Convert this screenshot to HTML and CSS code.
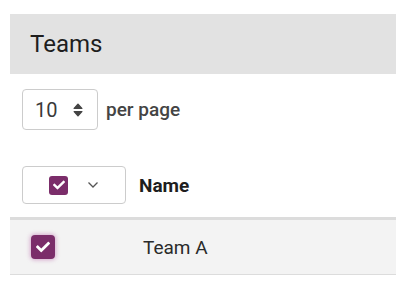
FILE: index.html
```html
<!doctype html>
<html lang="en">
<head>
    <meta charset="UTF-8">
    <title>Teams</title>
    <link rel="stylesheet" href="styles.css">
</head>
<body>
    <div class="page">
        <div class="page-header">Teams</div>

        <div class="per-page">
            <div class="per-page-select">
                <span>10</span>
                <svg class="sort-icon" width="10" height="14" viewBox="0 0 10 14">
                    <path d="M1.2 5.4 L5 1.2 L8.8 5.4 Z" fill="#444" stroke="#444" stroke-width="1.4" stroke-linejoin="round"/>
                    <path d="M1.2 8.6 L5 12.8 L8.8 8.6 Z" fill="#444" stroke="#444" stroke-width="1.4" stroke-linejoin="round"/>
                </svg>
            </div>
            <span class="per-page-label">per page</span>
        </div>

        <div class="team-table">
            <div class="team-head">
                <div class="col-select">
                    <div class="bulk-select">
                        <span class="check-box">
                            <svg width="12" height="12" viewBox="0 0 512 512"><path fill="#fff" d="M173.9 439.4l-166.4-166.4c-10-10-10-26.2 0-36.2l36.2-36.2c10-10 26.2-10 36.2 0L192 312.7 432.1 72.6c10-10 26.2-10 36.2 0l36.2 36.2c10 10 10 26.2 0 36.2l-294.4 294.4c-10 10-26.2 10-36.2 0z"/></svg>
                        </span>
                        <svg class="chevron" width="12" height="8" viewBox="0 0 12 8"><path d="M1.5 1.5 L6 6 L10.5 1.5" fill="none" stroke="#555" stroke-width="1.3"/></svg>
                    </div>
                </div>
                <div class="col-name">Name</div>
            </div>
            <div class="team-row">
                <div class="col-select">
                    <span class="check-box check-box-row">
                        <svg width="14" height="14" viewBox="0 0 512 512"><path fill="#fff" d="M173.9 439.4l-166.4-166.4c-10-10-10-26.2 0-36.2l36.2-36.2c10-10 26.2-10 36.2 0L192 312.7 432.1 72.6c10-10 26.2-10 36.2 0l36.2 36.2c10 10 10 26.2 0 36.2l-294.4 294.4c-10 10-26.2 10-36.2 0z"/></svg>
                    </span>
                </div>
                <div class="col-name">Team A</div>
            </div>
        </div>
    </div>
</body>
</html>
```

FILE: styles.css
```css
body {
    margin: 0;
    font-family: Roboto, "Liberation Sans", sans-serif;
    color: #222;
    background: #fff;
}
.page {
    padding: 14px 0 0 10px;
}
.page-header {
    height: 60px;
    line-height: 61px;
    padding-left: 20px;
    background: #e2e2e2;
    font-size: 24px;
    color: #1e1e1e;
}
.per-page {
    display: flex;
    align-items: center;
    gap: 8px;
    margin-top: 15px;
    padding-left: 12px;
}
.per-page-select {
    width: 76px;
    height: 41px;
    box-sizing: border-box;
    border: 1px solid #ccc;
    border-radius: 4px;
    display: flex;
    align-items: center;
    justify-content: space-between;
    padding: 0 14px 0 12px;
    font-size: 20px;
    color: #3a3a3a;
}
.per-page-label {
    font-size: 19px;
    font-weight: 500;
    color: #444;
}
.team-table {
    margin-top: 36px;
}
.team-head,
.team-row {
    display: flex;
    align-items: center;
}
.team-head {
    padding-bottom: 13px;
    border-bottom: 3px solid #dcdcdc;
}
.team-head .col-name {
    font-weight: bold;
    font-size: 19px;
    color: #1e1e1e;
}
.col-select {
    width: 129px;
    padding-left: 12px;
    box-sizing: border-box;
}
.bulk-select {
    width: 104px;
    height: 38px;
    box-sizing: border-box;
    border: 1px solid #ccc;
    border-radius: 4px;
    display: flex;
    align-items: center;
    padding-left: 26px;
    gap: 19px;
}
.check-box {
    width: 19px;
    height: 19px;
    border-radius: 3px;
    background: #7b2d6a;
    display: flex;
    align-items: center;
    justify-content: center;
}
.team-row {
    height: 54px;
    background: #f3f3f3;
    border-bottom: 1px solid #dcdcdc;
}
.team-row .col-select {
    padding-left: 21px;
}
.check-box-row {
    width: 24px;
    height: 24px;
    border-radius: 4px;
    box-shadow: 0 0 4px 1px rgba(170, 60, 150, 0.4);
}
.team-row .col-name {
    padding-left: 4px;
    font-size: 19px;
    color: #2a2a2a;
}
```
